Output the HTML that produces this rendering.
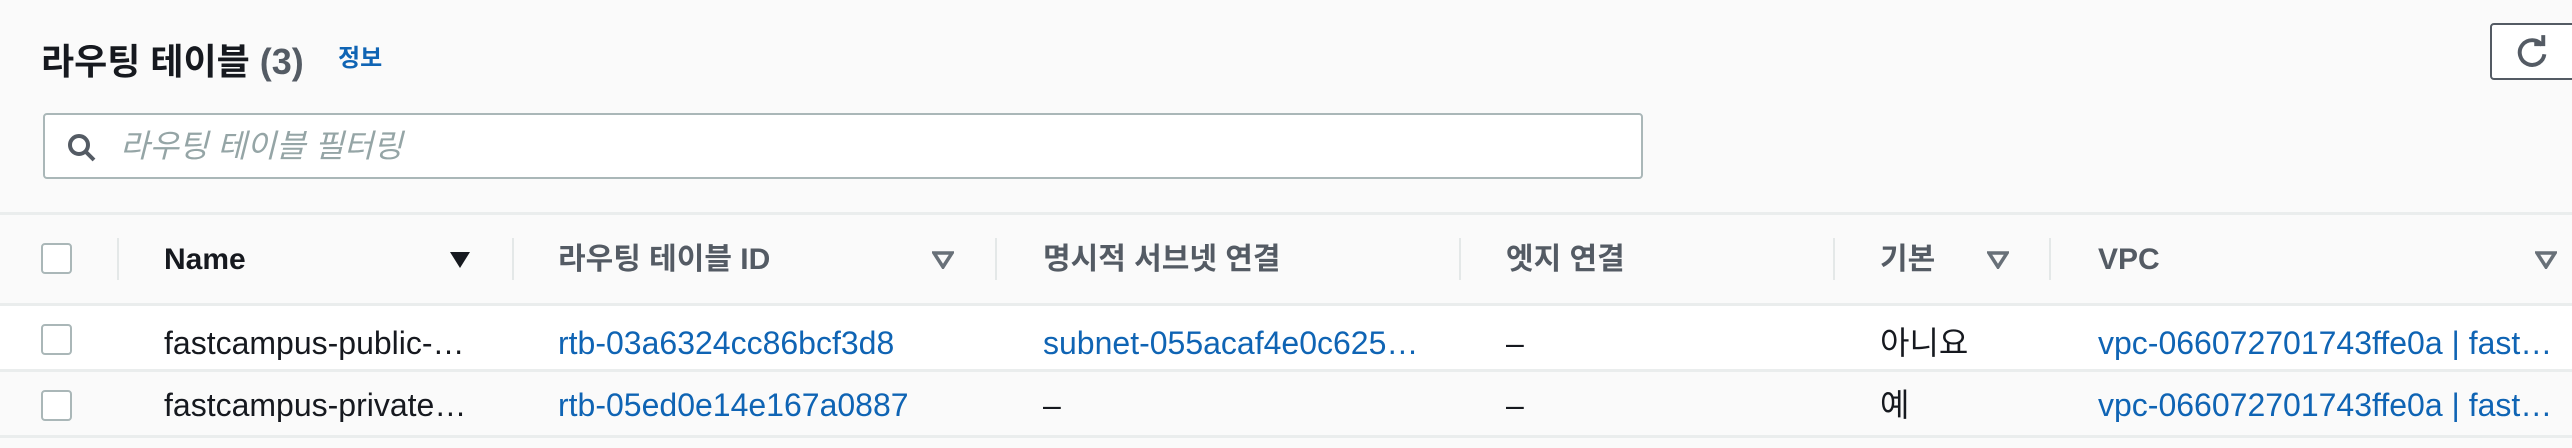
<!DOCTYPE html>
<html><head><meta charset="utf-8"><style>
*{margin:0;padding:0;box-sizing:border-box}
body{width:2572px;height:448px;background:#fafafa;font-family:"Liberation Sans","Noto Sans CJK KR",sans-serif;position:relative;overflow:hidden;color:#16191f}
.a{position:absolute;white-space:nowrap;line-height:34px}
.t{font-size:32px}
.h{font-size:30px;font-weight:bold}
.b{font-weight:bold}
.l{color:#0f64b4}
.cb{position:absolute;width:31px;height:31px;border:2px solid #aab7b8;border-radius:4px;background:#fff;left:41px}
.dv{position:absolute;width:2px;height:42px;background:#e4e8e8;top:238px}
.ell{overflow:hidden;text-overflow:ellipsis}
</style></head><body>
<div class="a b" style="left:41px;top:42px;font-size:36px;line-height:40px">라우팅 테이블 <span style="color:#545b64">(3)</span></div>
<div class="a b l" style="left:338px;top:44px;font-size:24px;line-height:30px">정보</div>
<div class="a" style="left:2490px;top:23px;width:100px;height:57px;border:2px solid #545b64;border-radius:4px;background:#fff">
<svg style="position:absolute;left:22px;top:9px" width="36" height="36" viewBox="0 0 32 32"><path d="M25 10 A11 11 0 1 0 27 18" fill="none" stroke="#545b64" stroke-width="3.5"/><path d="M18 9 H26 V1" fill="none" stroke="#545b64" stroke-width="3.5"/></svg></div>
<div class="a" style="left:43px;top:113px;width:1600px;height:66px;border:2px solid #aab7b8;border-radius:4px;background:#fff">
<svg style="position:absolute;left:22px;top:18px" width="30" height="30" viewBox="0 0 30 30"><circle cx="12" cy="12" r="9" fill="none" stroke="#545b64" stroke-width="4"/><path d="M18 18 L27 27" stroke="#545b64" stroke-width="4"/></svg>
<div class="a t" style="left:75px;top:14px;color:#95a5a6;font-style:italic">라우팅 테이블 필터링</div></div>
<div class="a" style="left:0;top:212px;width:2572px;height:3px;background:#eaeded"></div>
<div class="cb" style="top:243px"></div>
<div class="dv" style="left:117px"></div><div class="dv" style="left:512px"></div><div class="dv" style="left:995px"></div><div class="dv" style="left:1459px"></div><div class="dv" style="left:1833px"></div><div class="dv" style="left:2049px"></div>
<div class="a h" style="left:164px;top:243px">Name</div>
<div class="a h" style="left:558px;top:243px;color:#545b64">라우팅 테이블 ID</div>
<div class="a h" style="left:1043px;top:243px;color:#545b64">명시적 서브넷 연결</div>
<div class="a h" style="left:1506px;top:243px;color:#545b64">엣지 연결</div>
<div class="a h" style="left:1880px;top:243px;color:#545b64">기본</div>
<div class="a h" style="left:2098px;top:243px;color:#545b64">VPC</div>
<svg class="a" style="left:449px;top:251px" width="22" height="18"><path d="M1 1H21L11 17Z" fill="#16191f"/></svg>
<svg class="a" style="left:932px;top:251px" width="22" height="18"><path d="M2 2H20L11 16Z" fill="none" stroke="#687078" stroke-width="3.5"/></svg>
<svg class="a" style="left:1987px;top:251px" width="22" height="18"><path d="M2 2H20L11 16Z" fill="none" stroke="#687078" stroke-width="3.5"/></svg>
<svg class="a" style="left:2535px;top:251px" width="22" height="18"><path d="M2 2H20L11 16Z" fill="none" stroke="#687078" stroke-width="3.5"/></svg>
<div class="a" style="left:0;top:303px;width:2572px;height:69px;background:#fff;border-top:3px solid #eaeded;border-bottom:3px solid #eaeded"></div>
<div class="a" style="left:0;top:435px;width:2572px;height:3px;background:#eaeded"></div>
<div class="cb" style="top:324px"></div><div class="cb" style="top:390px"></div>
<div class="a t ell" style="left:164px;top:326px;width:310px">fastcampus-public-subnet-rtb</div>
<div class="a t ell" style="left:164px;top:388px;width:310px">fastcampus-private-subnet-rtb</div>
<div class="a t l" style="left:558px;top:326px">rtb-03a6324cc86bcf3d8</div>
<div class="a t l" style="left:558px;top:388px">rtb-05ed0e14e167a0887</div>
<div class="a t l ell" style="left:1043px;top:326px;width:382px">subnet-055acaf4e0c625abc</div>
<div class="a t" style="left:1043px;top:388px">–</div>
<div class="a t" style="left:1506px;top:326px">–</div>
<div class="a t" style="left:1506px;top:388px">–</div>
<div class="a t" style="left:1880px;top:326px">아니요</div>
<div class="a t" style="left:1880px;top:388px">예</div>
<div class="a t l ell" style="left:2098px;top:326px;width:460px">vpc-066072701743ffe0a | fastcampus</div>
<div class="a t l ell" style="left:2098px;top:388px;width:460px">vpc-066072701743ffe0a | fastcampus</div>
</body></html>
